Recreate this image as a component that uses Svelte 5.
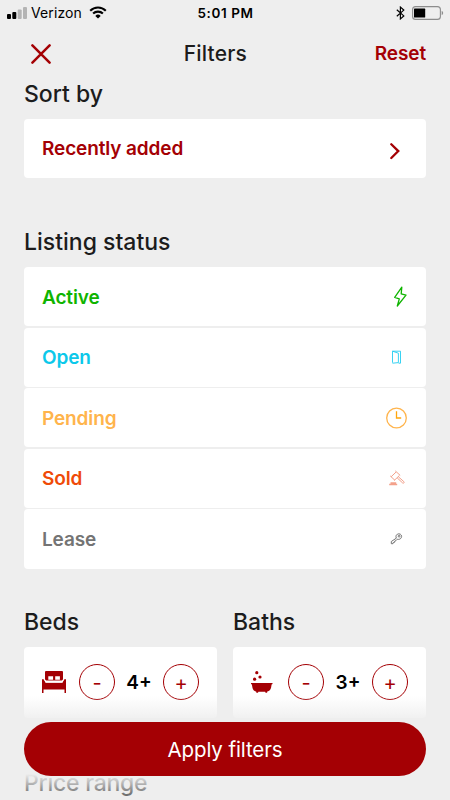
<script>
  let sortLabel = 'Recently added';

  const statuses = [
    { id: 'active', label: 'Active' },
    { id: 'open', label: 'Open' },
    { id: 'pending', label: 'Pending' },
    { id: 'sold', label: 'Sold' },
    { id: 'lease', label: 'Lease' }
  ];

  let counters = [
    { id: 'beds', label: 'Beds', value: 4 },
    { id: 'baths', label: 'Baths', value: 3 }
  ];

  function step(i, by) {
    counters[i].value = Math.max(0, counters[i].value + by);
  }

  function reset() {
    counters = counters.map((c) => ({ ...c, value: 0 }));
  }
</script>

<div class="screen">
  <div class="statusbar">
    <div class="carrier">
      <svg class="signal" width="20" height="12" viewBox="0 0 20 12">
        <rect x="0" y="7" width="4" height="5" rx="1" />
        <rect x="5.3" y="5" width="4" height="7" rx="1" />
        <rect x="10.7" y="2.5" width="4" height="9.5" rx="1" fill="#b4b4b4" />
        <rect x="16" y="0" width="4" height="12" rx="1" fill="#b4b4b4" />
      </svg>
      <span class="name">Verizon</span>
      <svg width="18" height="13" viewBox="0 0 18 13" fill="none" stroke="#000" stroke-width="2.1">
        <path d="M1.2 4.7a11.1 11.1 0 0 1 15.6 0" />
        <path d="M4.1 7.6a7 7 0 0 1 9.8 0" />
        <path d="M6.3 9.9a3.8 3.8 0 0 1 5.4 0L9 12.5z" fill="#000" stroke="none" />
      </svg>
    </div>
    <div class="time">5:01 PM</div>
    <div class="power">
      <svg width="9" height="14" viewBox="0 0 9 14" fill="none" stroke="#000" stroke-width="1.2">
        <path d="M.8 3.8l7 6.1-3.4 3V1.1l3.4 3-7 6.1" />
      </svg>
      <svg width="32" height="14" viewBox="0 0 32 14">
        <rect x=".6" y=".6" width="27.8" height="12.8" rx="3" fill="none" stroke="#8c8c8c" stroke-width="1.1" />
        <rect x="2" y="2.6" width="11.2" height="9" rx=".6" />
        <path d="M29.7 4.8c2 .8 2 3.6 0 4.4z" fill="#8c8c8c" />
      </svg>
    </div>
  </div>

  <header>
    <button class="close" aria-label="Close">
      <svg width="20" height="20" viewBox="0 0 20 20" stroke="#a40004" stroke-width="2.5" stroke-linecap="round">
        <path d="M1.4 1.4l17.2 17.2M18.6 1.4L1.4 18.6" />
      </svg>
    </button>
    <h1>Filters</h1>
    <button class="reset" on:click={reset}>Reset</button>
  </header>

  <section class="sort">
    <h2>Sort by</h2>
    <button class="row red">
      <span>{sortLabel}</span>
      <svg class="chevron" width="10" height="18" viewBox="0 0 10 18" fill="none" stroke="#a40004" stroke-width="2.3" stroke-linecap="round">
        <path d="M1.3 2.2l7 6.9-7 6.9" />
      </svg>
    </button>
  </section>

  <section class="status">
    <h2>Listing status</h2>
    <div class="list">
      {#each statuses as s (s.id)}
        <button class="row {s.id}">
          <span>{s.label}</span>
          <svg class="icon" width="24" height="24" viewBox="0 0 24 24" fill="none" stroke="currentColor">
            {#if s.id === 'active'}
              <path stroke-width="1.3" stroke-linejoin="round" d="M17.8 2.2L10.7 12.4l4.6 1.4-2 7.2 8.7-10.9-4.8-1.2z" />
            {:else if s.id === 'open'}
              <g stroke-width=".9" stroke="#22cdf0">
                <path d="M8.5 17.7V6.2h8v12h-1.9" />
                <path d="M8.5 6.2l5.9 2v9.4l-5.9.6" />
              </g>
            {:else if s.id === 'pending'}
              <circle cx="12.5" cy="12" r="9.8" stroke-width="1.3" />
              <path d="M12.5 5.2V12h4.7" stroke="#ffa60d" stroke-width="1.3" />
            {:else if s.id === 'sold'}
              <g stroke-width="1">
                <path d="M11.3 4.9l4.9 4.5M6.2 9.9l4.8 4.5M12.1 6l-5 4.8M15.4 9.5l-5 4.8" />
                <path d="M13.2 11.9l5.5 5.1c.8.7 2-.4 1.2-1.3l-5.6-5" />
                <path d="M5.2 18.5h8M6.5 17h5.7" stroke-width="1.4" />
              </g>
            {:else}
              <g stroke-width="1">
                <path d="M12.3 11.2c-1-2.2.2-4.3 2.5-4.4 2.3 0 3.5 2.2 2.4 4-.8 1.5-2.4 1.8-3.9 1.4l-1.4 1.5-1.1.3-.2 1.3-1.4.3-.2 1.1H7.3v-2.2z" />
                <circle cx="15.1" cy="9.2" r=".9" />
              </g>
            {/if}
          </svg>
        </button>
      {/each}
    </div>
  </section>

  <div class="counters">
    {#each counters as c, i (c.id)}
      <section>
        <h2>{c.label}</h2>
        <div class="counter">
          {#if c.id === 'beds'}
            <svg width="24" height="22" viewBox="0 0 24 22" fill="#a40004">
              <path fill-rule="evenodd" d="M4 0h16q1 0 1 1v8.5H3V1q0-1 1-1zM6.3 5.2v3.6h4.8V5.2zM13.2 5.2v3.6h4.7V5.2z" />
              <path d="M0 8.3h1.6l2 3.4h16.8l2-3.4H24V22h-1.5v-3.5h-21V22H0z" />
              <path d="M2.1 8.6l1.6 2.9h16.6l1.6-2.9h-1.1l-1 1.4H4.2l-1-1.4z" fill="#fff" />
            </svg>
          {:else}
            <svg width="24" height="22" viewBox="0 0 24 22" fill="#a40004">
              <circle cx="5.8" cy="1.7" r="1.6" />
              <circle cx="9" cy="6" r="1.6" />
              <circle cx="3.6" cy="8.2" r="1.6" />
              <path d="M0 12h21.5v1l-.9.6-.5 3q-.7 3.6-3.8 3.9l-.2 1.3h-1.6l-.3-1H7.4l-.4 1H5.4l-.3-1.3q-3-.4-3.7-3.9l-.5-3-.9-.6z" />
            </svg>
          {/if}
          <button class="step" on:click={() => step(i, -1)}>-</button>
          <span class="value">{c.value}+</span>
          <button class="step" on:click={() => step(i, 1)}>+</button>
        </div>
      </section>
    {/each}
  </div>

  <section class="price">
    <h2>Price range</h2>
  </section>

  <footer>
    <button class="apply">Apply filters</button>
  </footer>
</div>

<style>
  :global(body) { background: #eee; overflow: hidden; }
  .screen {
    position: relative;
    width: 450px;
    height: 800px;
    overflow: hidden;
    background: #eee;
    color: #1c1c1c;
    font-family: Inter, "Liberation Sans", sans-serif;
  }
  button { font: inherit; color: inherit; background: none; border: 0; padding: 0; }
  h1, h2 { margin: 0; font-weight: 500; }
  h2 { font-size: 23px; line-height: 28px; padding-top: 1px; margin-bottom: 11px; }
  svg { display: block; flex: none; }

  .statusbar {
    display: grid;
    grid-template-columns: 1fr auto 1fr;
    align-items: center;
    height: 25px;
    padding: 0 6px 0 7px;
    box-sizing: border-box;
    color: #000;
    font-size: 14px;
  }
  .carrier { display: flex; align-items: center; }
  .name { margin: 0 7px 0 4px; letter-spacing: 0.1px; }
  .time { font-weight: 600; font-size: 13.5px; letter-spacing: 0.6px; }
  .power { display: flex; align-items: center; justify-content: flex-end; gap: 7px; }

  header {
    display: flex;
    align-items: center;
    justify-content: space-between;
    height: 54px;
    padding: 3px 24px 0 31px;
    box-sizing: border-box;
  }
  h1 { font-size: 21px; line-height: 28px; letter-spacing: 0.15px; margin-left: 5px; }
  .reset { color: #a40004; font-size: 19px; font-weight: 600; letter-spacing: -0.1px; }

  .sort, .status { padding: 0 24px; }
  .sort { height: 148px; }
  .list { display: flex; flex-direction: column; gap: 1.4px; }
  .row {
    display: flex;
    align-items: center;
    justify-content: space-between;
    width: 100%;
    height: 59.2px;
    padding: 0 18px;
    box-sizing: border-box;
    background: #fff;
    border-radius: 4px;
    font-size: 19px;
    font-weight: 600;
    letter-spacing: -0.12px;
  }
  .list .row span { padding-top: 1px; }
  .chevron { margin: 5px 8px 0 0; }
  .red { color: #a40004; }
  .active { color: #0fb400; }
  .open { color: #0cc8ea; }
  .pending { color: #ffb44c; }
  .sold { color: #ef4a08; }
  .sold .icon { color: #f3a18b; }
  .lease { color: #747474; }

  .counters { display: flex; gap: 16px; padding: 38px 24px 0; }
  .counters section { flex: 1; }
  .counter {
    display: flex;
    align-items: center;
    height: 71px;
    padding: 0 18px;
    box-sizing: border-box;
    background: #fff;
    border-radius: 4px;
  }
  .step {
    width: 36px;
    height: 36px;
    border: 1.2px solid #a40004;
    border-radius: 50%;
    color: #a40004;
    font-size: 20px;
    line-height: 34px;
    padding-top: 1px;
    margin-left: 13px;
  }
  .value { flex: 1; text-align: center; color: #000; font-size: 19px; font-weight: 600; }
  .value + .step { margin-left: 0; }

  .price { padding: 50px 24px 0; letter-spacing: -0.25px; }

  footer {
    position: absolute;
    left: 0;
    right: 0;
    bottom: 0;
    height: 104px;
    padding: 26px 24px 0;
    box-sizing: border-box;
    background: linear-gradient(rgba(238, 238, 238, 0), #eee 26px, #eee 78px, rgba(238, 238, 238, 0.25));
  }
  .apply {
    display: block;
    width: 100%;
    height: 54px;
    border-radius: 27px;
    background: #a40004;
    color: #fff;
    font-size: 20.5px;
    letter-spacing: -0.1px;
  }
</style>
